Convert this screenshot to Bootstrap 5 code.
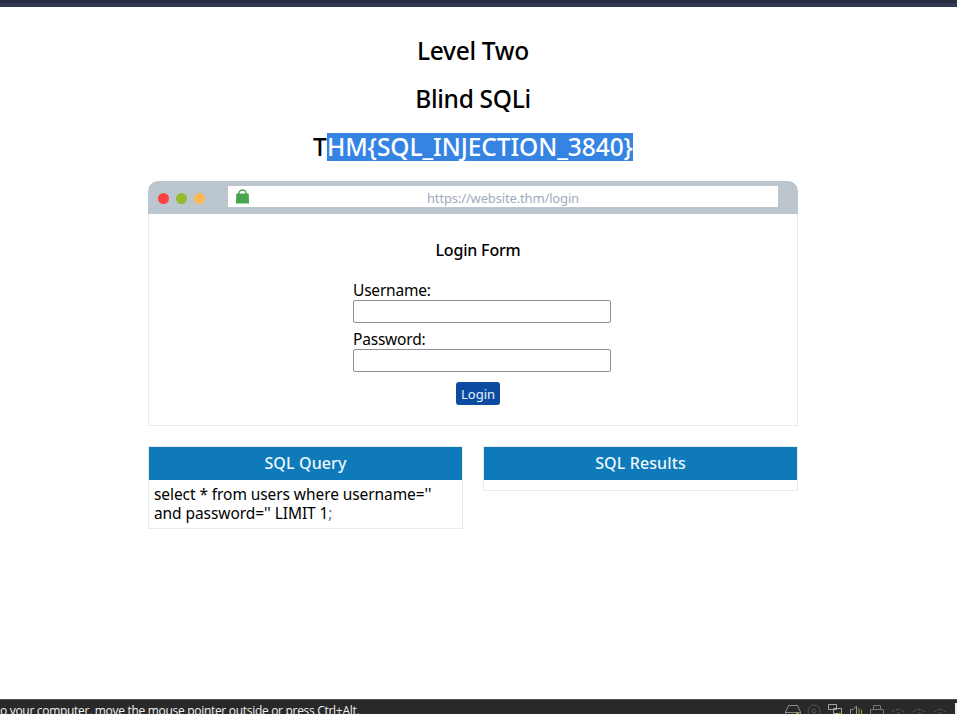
<!DOCTYPE html>
<html lang="en">
<head>
<meta charset="utf-8">
<meta name="viewport" content="width=device-width, initial-scale=1">
<title>SQL Injection - Level Two</title>
<link rel="stylesheet" href="https://cdn.jsdelivr.net/npm/bootstrap@5.3.0/dist/css/bootstrap.min.css">
<style>
body{font-family:"Noto Sans","Open Sans",sans-serif;font-size:15.5px;line-height:19px;color:#000;background:#fff}
.top-strip{height:7px;background:linear-gradient(#262d42 0 3px,#333854 3px)}
.stage{width:650px;margin-left:148px;padding-top:30px}
.level-title{font-size:24.5px;font-weight:500;line-height:28px;margin-bottom:20px;letter-spacing:-.3px}
.flag-title{letter-spacing:0}
.picked{background:#3584e4;color:#fff;display:inline-block;height:28px;width:306px;letter-spacing:-.06px}
.browser-bar{height:33px;background:#bbc6cf;border-radius:10px 10px 0 0;padding:5px 20px 7px 10px}
.dot{width:11px;height:11px;border-radius:50%;margin-right:7px;margin-top:4px}
.dot-red{background:#ff4040}.dot-green{background:#92bb2d}.dot-amber{background:#ffb754}
.address{margin-left:16px;height:21px;font-size:13px;letter-spacing:-.15px;color:#a0aabf}
.lock{margin-left:8px}
.address-text{padding-right:21px;line-height:24px}
.frame-line{border:1px solid #e8eaec}
.browser-body{height:212px;border-top:0;padding-top:26px}
.form-title{font-size:16px;font-weight:500;line-height:20px;letter-spacing:-.18px;margin-bottom:21px;padding-left:10px}
.login-form{width:258px;margin-left:204px}
.login-form label{height:19px;line-height:18px;letter-spacing:-.2px}
.login-form input{height:23px;border:1px solid #8f8f9d;border-radius:2px;margin-bottom:7px}
.btn-login{--bs-btn-color:#e8f2fc;--bs-btn-bg:#0b4ca0;--bs-btn-border-width:0;--bs-btn-padding-x:0;--bs-btn-padding-y:0;width:44px;height:23px;font-size:13px;line-height:24px;border-radius:3px;margin:3px 8px 0 0}
.sql-row{gap:20px;margin-top:20px}
.sql-head{height:33px;line-height:32px;background:#0f7ab9;color:#eef7fc;font-size:16px;font-weight:500;letter-spacing:.12px}
.sql-text{padding:5px 0 5px 5px;min-height:10px;letter-spacing:-.08px}
.semi{color:#777}
.status{height:15px;background:#292929;border-top:1px solid #555;color:#f2f2f2;font-family:"Open Sans",sans-serif;font-size:12px;line-height:22px;letter-spacing:-.3px}
</style>
<script src="https://cdn.jsdelivr.net/npm/bootstrap@5.3.0/dist/js/bootstrap.bundle.min.js"></script>
</head>
<body class="d-flex flex-column vh-100 overflow-hidden">
<div class="top-strip flex-shrink-0"></div>
<main class="flex-fill">
  <div class="stage">
    <header class="text-center">
      <h1 class="level-title">Level Two</h1>
      <h1 class="level-title">Blind SQLi</h1>
      <h1 class="level-title flag-title d-flex justify-content-center"><span>T</span><span class="picked">HM{SQL_INJECTION_3840}</span></h1>
    </header>
    <section>
      <div class="browser-bar d-flex align-items-center">
        <span class="dot dot-red"></span><span class="dot dot-green"></span><span class="dot dot-amber"></span>
        <div class="address bg-white flex-fill d-flex">
          <svg class="lock flex-shrink-0" width="13" height="20" viewBox="0 0 13 20"><path d="M2.900 9V7.600a3.600 3.600 0 0 1 7.200 0V9" fill="none" stroke="#48a54b" stroke-width="1.500"/><path d="M1 7.500h11q.8 0 .8.800L13 17.500H0L.200 8.300q0-.8.8-.8z" fill="#48a54b"/></svg>
          <span class="address-text flex-fill text-center">https://website.thm/login</span>
        </div>
      </div>
      <div class="browser-body frame-line">
        <h2 class="form-title text-center">Login Form</h2>
        <form class="login-form d-flex flex-column">
          <label for="user">Username:</label>
          <input id="user" type="text" class="w-100">
          <label for="pass">Password:</label>
          <input id="pass" type="password" class="w-100">
          <button type="button" class="btn btn-login align-self-center">Login</button>
        </form>
      </div>
    </section>
    <section class="sql-row d-flex align-items-start">
      <div class="frame-line flex-fill w-50">
        <div class="sql-head text-center">SQL Query</div>
        <div class="sql-text">select * from users where username=''<br>and password='' LIMIT 1<span class="semi">;</span></div>
      </div>
      <div class="frame-line flex-fill w-50">
        <div class="sql-head text-center">SQL Results</div>
        <div class="sql-text"></div>
      </div>
    </section>
  </div>
</main>
<footer class="status flex-shrink-0 d-flex justify-content-between overflow-hidden">
  <span class="text-nowrap">o your computer, move the mouse pointer outside or press Ctrl+Alt.</span>
  <svg width="177" height="14" viewBox="780 700 177 14" fill="none" stroke="#8b8b8b">
    <path d="M785.500 714v-2l3-6.500h9l3 6.500v2M786 712.500h14"/><path d="M796 713.500h3" stroke="#7fa32f"/>
    <g stroke="#555"><circle cx="814" cy="711" r="6"/><circle cx="814" cy="711" r="2"/></g>
    <path d="M828.500 704.500h8v5h-8zM833.500 708.500h8v5h-8z" stroke="#a5a5a5"/><path d="M838 713.500h3" stroke="#7fa32f"/>
    <path d="M850.500 714v-4.500h2.500l3.500-3.500v8" stroke="#999"/><path d="M859 708v6M861.500 709.500v4.500" stroke="#7fa32f"/>
    <path d="M873.500 709v-3.500h7v3.500M870.500 714v-4.500h13v4.500" stroke="#777"/>
    <g stroke="#555"><path d="M892 712l3-2m6 0l3 2M896 709.500h4M897 713h3"/><path d="M913 712l3-2m6 0l3 2M917 709.500h4M918 713h3"/><path d="M934 712l3-2m6 0l3 2M938 709.500h4M939 713h3"/></g>
    <path d="M955 703h2v11h-2z" fill="#eee" stroke="none"/>
  </svg>
</footer>
</body>
</html>
